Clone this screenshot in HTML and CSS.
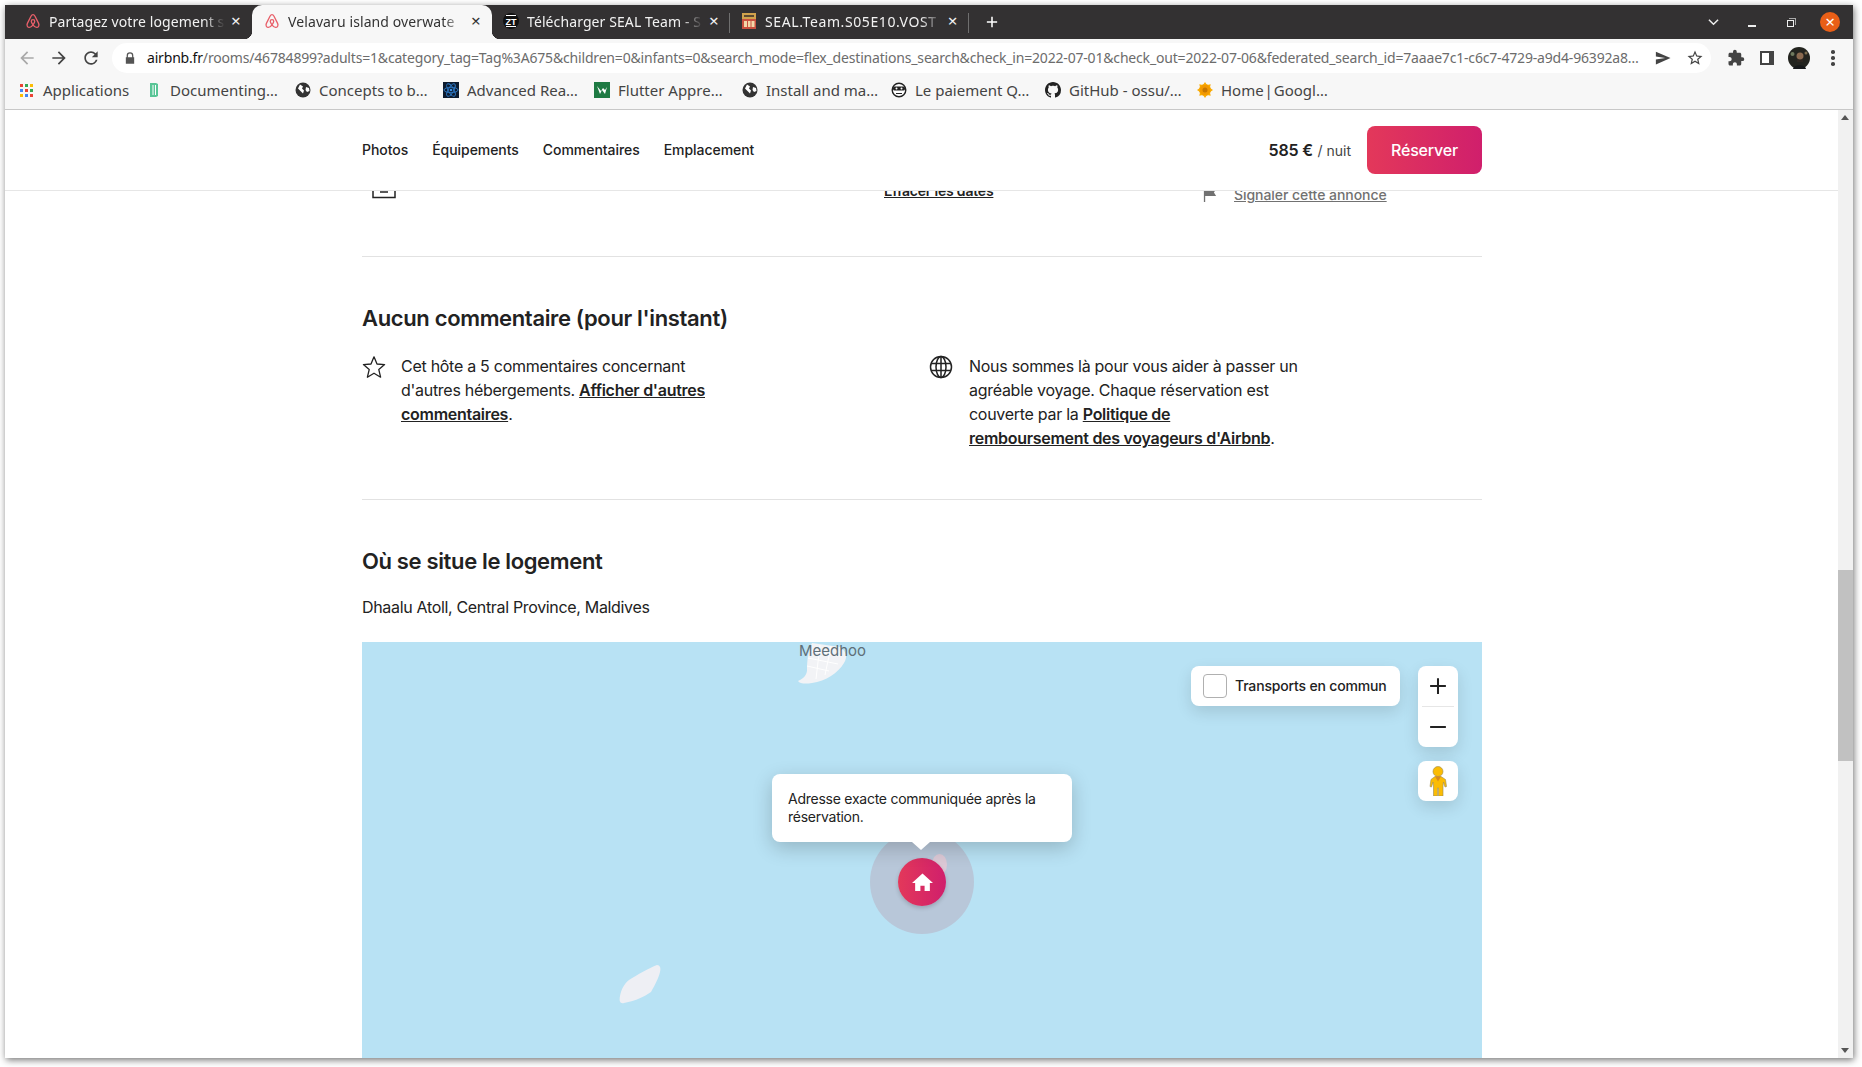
FILE: index.html
```html
<!DOCTYPE html>
<html lang="fr">
<head>
<meta charset="utf-8">
<title>Velavaru island overwater</title>
<link rel="stylesheet" href="styles.css">
</head>
<body>
<div class="window">
  <div class="tabstrip">
    <div class="tab tab-first">
      <svg class="fav" viewBox="0 0 24 24"><path class="belo" d="M12 2.5c-1.4 0-2.2.9-3 2.4L3.6 15.6c-1.5 3.2.3 6 3 6 2 0 3.6-1.3 5.4-3.8 1.8 2.5 3.4 3.8 5.4 3.8 2.7 0 4.5-2.8 3-6L15 4.9c-.8-1.5-1.6-2.4-3-2.4zM12 17.8c-1.5-2-2.6-3.8-2.6-5.3a2.6 2.6 0 0 1 5.2 0c0 1.5-1.1 3.3-2.6 5.3z"/></svg>
      <span class="tab-title">Partagez votre logement s</span>
      <span class="tab-x">×</span>
    </div>
    <div class="tab tab-active">
      <svg class="fav" viewBox="0 0 24 24"><path class="belo" d="M12 2.5c-1.4 0-2.2.9-3 2.4L3.6 15.6c-1.5 3.2.3 6 3 6 2 0 3.6-1.3 5.4-3.8 1.8 2.5 3.4 3.8 5.4 3.8 2.7 0 4.5-2.8 3-6L15 4.9c-.8-1.5-1.6-2.4-3-2.4zM12 17.8c-1.5-2-2.6-3.8-2.6-5.3a2.6 2.6 0 0 1 5.2 0c0 1.5-1.1 3.3-2.6 5.3z"/></svg>
      <span class="tab-title">Velavaru island overwate</span>
      <span class="tab-x">×</span>
    </div>
    <div class="tab tab-sep">
      <svg class="fav" viewBox="0 0 16 16"><circle cx="8" cy="8" r="8" fill="#111"/><path d="M3 2.500h10M3 13.500h10" stroke="#fff" stroke-width="1.200"/><text x="8" y="11.500" class="zt">ZT</text></svg>
      <span class="tab-title">Télécharger SEAL Team - S</span>
      <span class="tab-x">×</span>
    </div>
    <div class="tab tab-sep tab-caps">
      <svg class="fav" viewBox="0 0 16 16"><rect x="1" width="14" height="6" fill="#d0a24c"/><rect x="1" y="6" width="14" height="10" fill="#c9503f"/><rect x="3" y="2" width="10" height="2" fill="#5b4a32"/><rect x="3" y="8" width="3" height="6" fill="#f2d7a8"/><rect x="7" y="8" width="2.500" height="6" fill="#f2d7a8"/><rect x="10.500" y="8" width="3" height="6" fill="#f2d7a8"/></svg>
      <span class="tab-title">SEAL.Team.S05E10.VOST</span>
      <span class="tab-x">×</span>
    </div>
    <svg class="newtab" viewBox="0 0 14 14"><path d="M7 1v12M1 7h12"/></svg>
    <div class="winctl">
      <svg class="chev" viewBox="0 0 12 8"><path d="M1 1.5l5 5 5-5"/></svg>
      <span class="minbtn"></span>
      <span class="maxbtn"></span>
      <span class="closebtn">×</span>
    </div>
  </div>

  <div class="toolbar">
    <svg class="tb-ico dim" viewBox="0 0 24 24"><path d="M20 11H7.83l5.59-5.59L12 4l-8 8 8 8 1.41-1.41L7.83 13H20v-2z"/></svg>
    <svg class="tb-ico" viewBox="0 0 24 24"><path d="M4 11h12.170l-5.590-5.590L12 4l8 8-8 8-1.410-1.410L16.170 13H4v-2z"/></svg>
    <svg class="tb-ico" viewBox="0 0 24 24"><path d="M17.65 6.35A7.958 7.958 0 0 0 12 4c-4.42 0-7.99 3.58-7.99 8s3.57 8 7.99 8c3.73 0 6.84-2.55 7.73-6h-2.08A5.99 5.99 0 0 1 12 18c-3.31 0-6-2.69-6-6s2.69-6 6-6c1.66 0 3.14.69 4.22 1.78L13 11h7V4l-2.35 2.35z"/></svg>
    <div class="omnibox">
      <svg class="lock" viewBox="0 0 12 14"><path d="M2 6V4.2a4 4 0 0 1 8 0V6h1v8H1V6h1zm1.5 0h5V4.2a2.5 2.5 0 0 0-5 0V6z"/></svg>
      <span class="url"><b class="host">airbnb.fr</b>/rooms/46784899?adults=1&amp;category_tag=Tag%3A675&amp;children=0&amp;infants=0&amp;search_mode=flex_destinations_search&amp;check_in=2022-07-01&amp;check_out=2022-07-06&amp;federated_search_id=7aaae7c1-c6c7-4729-a9d4-96392a8…</span>
      <svg class="omni-ico" viewBox="0 0 24 24"><path d="M2.5 20.5L22 12 2.5 3.5v6.6L15 12 2.5 13.9z"/></svg>
      <svg class="omni-ico" viewBox="0 0 24 24"><path d="M22 9.24l-7.19-.62L12 2 9.19 8.63 2 9.24l5.46 4.73L5.82 21 12 17.27 18.18 21l-1.63-7.03L22 9.24zM12 15.4l-3.76 2.27 1-4.28-3.32-2.88 4.38-.38L12 6.1l1.71 4.04 4.38.38-3.32 2.88 1 4.28L12 15.4z"/></svg>
    </div>
    <svg class="tb-ico ext" viewBox="0 0 24 24"><path d="M20.5 11H19V7c0-1.1-.9-2-2-2h-4V3.5a2.5 2.5 0 0 0-5 0V5H4c-1.1 0-1.99.9-1.99 2v3.8H3.5c1.49 0 2.7 1.21 2.7 2.7s-1.21 2.7-2.7 2.7H2V20c0 1.1.9 2 2 2h3.8v-1.5c0-1.49 1.21-2.7 2.7-2.7s2.7 1.21 2.7 2.7V22H17c1.1 0 2-.9 2-2v-4h1.5a2.5 2.5 0 0 0 0-5z"/></svg>
    <span class="sidepanel"></span>
    <svg class="avatar" viewBox="0 0 22 22"><circle cx="11" cy="11" r="11" fill="#23241f"/><circle cx="12" cy="9" r="3.500" fill="#8b6a50"/><path d="M9 11c1 3 5 3 6 0v4H9z" fill="#2f2620"/><path d="M5 22c1-5 12-5 13 0z" fill="#16181a"/><circle cx="4.500" cy="7" r="2" fill="#6f7a5e"/><circle cx="18" cy="6" r="1.500" fill="#7d6d4e"/></svg>
    <span class="dots"><i></i><i></i><i></i></span>
  </div>

  <div class="bookmarks">
    <div class="bm bm-apps">
      <span class="apps"><i class="r"></i><i class="g"></i><i class="y"></i><i class="b"></i><i class="r"></i><i class="g"></i><i class="y"></i><i class="b"></i><i class="r"></i></span>
      <span>Applications</span>
    </div>
    <div class="bm bm-doc">
      <svg class="bm-ico" viewBox="0 0 16 16"><path d="M4 1h6l2 1v12l-2 1H4z" fill="#58c596"/><path d="M7 3v10M9.500 3v10" stroke="#fff" fill="none"/></svg>
      <span>Documenting…</span>
    </div>
    <div class="bm bm-con">
      <svg class="bm-ico" viewBox="0 0 16 16"><circle cx="8" cy="8" r="7.500" fill="#333"/><path d="M5 2.500l3 2-1 2 2 2-1 3-2-2-3-3zM11 5l3 1 .5 3-2.500 1-1.500-2z" fill="#fff"/></svg>
      <span>Concepts to b…</span>
    </div>
    <div class="bm bm-adv">
      <svg class="bm-ico" viewBox="0 0 16 16"><rect width="16" height="16" fill="#0d1b2e"/><g fill="none" stroke="#2d79c7" stroke-width=".9"><ellipse cx="8" cy="8" rx="7" ry="2.700"/><ellipse cx="8" cy="8" rx="7" ry="2.700" transform="rotate(60 8 8)"/><ellipse cx="8" cy="8" rx="7" ry="2.700" transform="rotate(120 8 8)"/></g><circle cx="8" cy="8" r="1.300" fill="#3d8fe0"/></svg>
      <span>Advanced Rea…</span>
    </div>
    <div class="bm bm-flu">
      <svg class="bm-ico" viewBox="0 0 16 16"><rect width="16" height="16" fill="#1e7a43"/><path d="M3 4l3 8 2-4 3 4 2-7-2 3-2-2-2 3z" fill="#fff"/></svg>
      <span>Flutter Appre…</span>
    </div>
    <div class="bm bm-ins">
      <svg class="bm-ico" viewBox="0 0 16 16"><circle cx="8" cy="8" r="7.500" fill="#333"/><path d="M5 2.500l3 2-1 2 2 2-1 3-2-2-3-3zM11 5l3 1 .5 3-2.500 1-1.500-2z" fill="#fff"/></svg>
      <span>Install and ma…</span>
    </div>
    <div class="bm bm-pay">
      <svg class="bm-ico" viewBox="0 0 16 16"><circle cx="8" cy="8" r="6.800" fill="#fff" stroke="#222" stroke-width="1.400"/><rect x="2" y="4.500" width="12" height="4" rx="1.500" fill="#222"/><circle cx="5.500" cy="6.500" r="1" fill="#fff"/><circle cx="10.500" cy="6.500" r="1" fill="#fff"/><path d="M5 11.500h6" stroke="#222"/></svg>
      <span>Le paiement Q…</span>
    </div>
    <div class="bm bm-git">
      <svg class="bm-ico" viewBox="0 0 16 16"><path fill="#222" d="M8 0C3.580 0 0 3.580 0 8c0 3.540 2.290 6.530 5.470 7.590.4.070.55-.17.55-.38 0-.19-.01-.82-.01-1.490-2.010.37-2.530-.49-2.690-.94-.09-.23-.48-.94-.82-1.130-.28-.15-.68-.52-.01-.53.630-.01 1.080.58 1.230.82.720 1.210 1.870.87 2.330.66.070-.52.280-.87.510-1.070-1.780-.2-3.640-.89-3.640-3.950 0-.87.310-1.590.820-2.150-.08-.2-.36-1.020.08-2.120 0 0 .67-.21 2.200.82.640-.18 1.320-.27 2-.27s1.360.09 2 .27c1.530-1.040 2.200-.82 2.200-.82.440 1.100.16 1.920.08 2.120.51.560.82 1.270.82 2.150 0 3.070-1.870 3.750-3.650 3.950.29.250.54.730.54 1.480 0 1.070-.01 1.930-.01 2.200 0 .21.150.46.550.38A8.010 8.010 0 0 0 16 8c0-4.420-3.580-8-8-8z"/></svg>
      <span>GitHub - ossu/…</span>
    </div>
    <div class="bm bm-home">
      <svg class="bm-ico" viewBox="0 0 16 16"><circle cx="8" cy="8" r="6" fill="#f29900"/><path d="M8 0l2 3H6zM8 16l2-3H6zM0 8l3 2V6zM16 8l-3 2V6zM2.300 2.300l3.500.8-2.700 2.700zM13.700 13.700l-3.500-.8 2.700-2.700zM13.700 2.300l-.8 3.500-2.700-2.700zM2.300 13.700l.8-3.500 2.700 2.700z" fill="#f9ab00"/><circle cx="8" cy="8" r="2.500" fill="#c77700"/></svg>
      <span>Home | Googl…</span>
    </div>
  </div>

  <div class="viewport">
    <div class="page">
      <nav class="stickybar">
        <div class="stickyinner">
          <div class="sections">
            <span>Photos</span>
            <span>Équipements</span>
            <span>Commentaires</span>
            <span>Emplacement</span>
          </div>
          <div class="book">
            <span class="price"><b>585 €</b> <span class="pernight">/ nuit</span></span>
            <span class="reserve">Réserver</span>
          </div>
        </div>
      </nav>

      <main class="content">
        <div class="cutrow">
          <svg class="cal" viewBox="0 0 24 30"><path d="M1 1v26.500h22V1M8 22h8" fill="none" stroke="#222" stroke-width="1.500"/></svg>
          <a class="clear">Effacer les dates</a>
          <span class="report">
            <svg class="flag" viewBox="0 0 16 16"><path d="M1 0h1.500v1H15l-2.500 4L15 9H2.500v7H1z" fill="#717171"/></svg>
            <a>Signaler cette annonce</a>
          </span>
        </div>

        <section class="reviews">
          <h2>Aucun commentaire (pour l'instant)</h2>
          <div class="twocol">
            <div class="note">
              <svg class="note-ico" viewBox="0 0 24 24"><path d="M12 1.800l3 7.200 7.600.6-5.800 5 1.800 7.600L12 18.200l-6.600 4 1.800-7.600-5.800-5L9 9z" fill="none" stroke="#222" stroke-width="1.300" stroke-linejoin="round"/></svg>
              <p>Cet hôte a 5 commentaires concernant<br>d'autres hébergements. <a>Afficher d'autres<br>commentaires</a>.</p>
            </div>
            <div class="note note-wide">
              <svg class="note-ico" viewBox="0 0 24 24"><g fill="none" stroke="#222" stroke-width="1.500"><circle cx="12" cy="12" r="10.500"/><ellipse cx="12" cy="12" rx="5" ry="10.500"/><path d="M2 8.500h20M2 15.500h20M12 1.500v21"/></g></svg>
              <p>Nous sommes là pour vous aider à passer un<br>agréable voyage. Chaque réservation est<br>couverte par la <a>Politique de<br>remboursement des voyageurs d'Airbnb</a>.</p>
            </div>
          </div>
        </section>

        <section class="location">
          <h2>Où se situe le logement</h2>
          <p class="place">Dhaalu Atoll, Central Province, Maldives</p>
          <div class="map">
            <svg class="island isl-a" viewBox="0 0 50 41"><path d="M14 0L42 4C48 8 50 14 46 20 40 30 28 38 14 40 8 41 2 41 0 38 4 36 8 34 9 28 9 18 10 8 14 0z" fill="#f2f3f6"/><path d="M12 8l30 5M10 15l30 6M9 23l22 5M22 2l-4 34M33 3l-6 29" stroke="#fff" fill="none"/></svg>
            <span class="map-label">Meedhoo</span>
            <svg class="island isl-b" viewBox="0 0 42 40"><path d="M38 1c3 0 4 3 3 7-1 5-5 13-9 20-6 4-15 9-27 11-4 1-5-2-4-7 1-6 4-12 9-16C18 11 30 4 38 1z" fill="#eeeff4"/></svg>

            <label class="transit"><span class="checkbox"></span><span class="transit-label">Transports en commun</span></label>
            <div class="zoomctl">
              <button class="zoombtn"><svg viewBox="0 0 16 16"><path d="M8 1v14M1 8h14"/></svg></button>
              <button class="zoombtn"><svg viewBox="0 0 16 16"><path d="M1 8h14"/></svg></button>
            </div>
            <div class="pegman">
              <svg viewBox="0 0 18 30"><circle cx="9" cy="5.500" r="5" fill="#fbbc04" stroke="#9a8a55" stroke-width=".6"/><path d="M6 10.500h6l4.500 3 1 7-1.500.5-1.500-5-.5 4v10H9.500v-8h-1v8H4.500V20l-.5-4-1.500 5L1 20.500l1-7z" fill="#fbbc04" stroke="#9a8a55" stroke-width=".6"/><path d="M6 10.500h6l-3 5z" fill="#d98a1f"/></svg>
            </div>

            <span class="area"></span>
            <span class="islet"></span>
            <span class="pin"><svg viewBox="0 0 20 20"><path d="M10 1.500L0 10.500h3V18h5v-5h4v5h5v-7.500h3z" fill="#fff"/></svg></span>
            <div class="tooltip">Adresse exacte communiquée après la réservation.</div>
          </div>
        </section>
      </main>
    </div>
    <div class="scrollbar">
      <span class="sb-up"></span>
      <span class="sb-thumb"></span>
      <span class="sb-down"></span>
    </div>
  </div>
</div>
</body>
</html>
```

FILE: styles.css
```css
* { box-sizing: border-box; }
html, body { margin: 0; height: 100%; background: #fff; overflow: hidden; }
body { padding: 5px 0 0 5px; font-family: "Inter", "Noto Sans", sans-serif; color: #222; }

.window {
  width: 1848px;
  height: 1053px;
  display: flex;
  flex-direction: column;
  background: #fff;
  box-shadow: 1px 2px 7px rgba(0,0,0,.55);
}

/* tab strip */
.tabstrip {
  height: 34px;
  background: #333132;
  display: flex;
  align-items: stretch;
  flex: none;
  font-family: "Noto Sans", sans-serif;
  font-size: 14px;
  letter-spacing: .1px;
  color: #f2f2f2;
}
.tab {
  width: 239px;
  display: flex;
  align-items: center;
  padding: 0 9px 2px 11px;
  position: relative;
}
.tab-first { width: 247px; padding-left: 20px; }
.tab-active {
  background: #f7f7f7;
  color: #333;
  border-radius: 10px 10px 0 0;
  width: 240px;
  padding-left: 12px;
}
.tab-active::before,
.tab-active::after {
  content: "";
  position: absolute;
  bottom: 0;
  width: 8px;
  height: 8px;
}
.tab-active::before { left: -8px; background: radial-gradient(circle at 0 0, transparent 8px, #f7f7f7 8.5px); }
.tab-active::after { right: -8px; background: radial-gradient(circle at 100% 0, transparent 8px, #f7f7f7 8.5px); }
.tab-active + .tab-sep { width: 238px; }
.tab-caps { letter-spacing: .6px; }
.tab-sep::after {
  content: "";
  position: absolute;
  right: 0;
  top: 8px;
  height: 20px;
  width: 1px;
  background: #6f6f6f;
}
.fav { width: 16px; height: 16px; flex: none; margin-right: 8px; }
.belo { fill: none; stroke: #e8606a; stroke-width: 2; }
.zt { font: 700 9px "Liberation Sans", sans-serif; fill: #fff; text-anchor: middle; }
.tab-title {
  flex: 1;
  min-width: 0;
  white-space: nowrap;
  -webkit-mask-image: linear-gradient(to right, #000 88%, transparent 100%);
  mask-image: linear-gradient(to right, #000 88%, transparent 100%);
}
.tab-x { width: 14px; margin-left: 4px; font-size: 17px; line-height: 16px; text-align: center; flex: none; }
.newtab { width: 12px; height: 12px; margin: 11px 0 0 17px; flex: none; }
.newtab path { stroke: #fff; stroke-width: 1.800; fill: none; }
.winctl { margin-left: auto; display: flex; align-items: center; padding-right: 13px; }
.chev { width: 11px; height: 8px; margin-right: 2px; }
.chev path { fill: none; stroke: #eee; stroke-width: 1.600; }
.minbtn { width: 8px; height: 1.500px; background: #eee; margin: 8px 0 0 27px; }
.maxbtn { width: 7px; height: 7px; border: 1px solid #eee; margin: 2px 0 0 31px; position: relative; }
.maxbtn::after { content: ""; position: absolute; left: 1px; top: -3px; width: 6px; height: 6px; border: 1px solid #aaa; border-left: 0; border-bottom: 0; }
.closebtn {
  width: 20px;
  height: 20px;
  border-radius: 50%;
  background: #e95f17;
  color: #fff;
  font-size: 17px;
  letter-spacing: 0;
  line-height: 19px;
  text-align: center;
  margin-left: 26px;
}

/* toolbar */
.toolbar {
  height: 34px;
  background: #f7f7f7;
  flex: none;
  display: flex;
  align-items: center;
  padding: 4px 0 0 12px;
}
.tb-ico { width: 20px; height: 20px; fill: #444; flex: none; margin-right: 12px; }
.tb-ico.dim { fill: #a9a9a9; }
.omnibox {
  width: 1599px;
  height: 30px;
  margin: 0 13px 0 -1px;
  border-radius: 15px;
  background: #fff;
  display: flex;
  align-items: center;
  padding: 0 7px 0 13px;
  flex: none;
}
.lock { width: 10px; height: 12px; fill: #555; flex: none; margin-right: 12px; }
.url {
  flex: 1;
  font-family: "Noto Sans", sans-serif;
  font-size: 14px;
  letter-spacing: -.18px;
  color: #6c6c6c;
  white-space: nowrap;
  padding-bottom: 2px;
}
.host { font-weight: 400; color: #111; }
.omni-ico { width: 18px; height: 18px; fill: #444; flex: none; margin-left: 14px; }
.ext { width: 18px; height: 18px; margin: 0 15px 0 3px; }
.sidepanel { width: 14px; height: 14px; border: 2px solid #444; border-right-width: 5px; background: #fff; flex: none; margin-right: 14px; }
.avatar { width: 22px; height: 22px; flex: none; }
.dots { display: flex; flex-direction: column; gap: 2.500px; margin-left: 21px; }
.dots i { width: 3.500px; height: 3.500px; border-radius: 50%; background: #444; display: block; }

/* bookmarks */
.bookmarks {
  height: 37px;
  flex: none;
  background: #f7f7f7;
  border-bottom: 1px solid #c8c8c8;
  display: flex;
  align-items: center;
  padding: 0 0 2px 15px;
  font-family: "Noto Sans", sans-serif;
  font-size: 15px;
  color: #444;
  white-space: nowrap;
}
.bm { display: flex; align-items: center; flex: none; }
.bm-ico { width: 16px; height: 16px; margin-right: 8px; flex: none; }
.bm-apps { width: 126px; }
.bm-doc { width: 149px; }
.bm-con { width: 148px; }
.bm-adv { width: 151px; }
.bm-flu { width: 148px; }
.bm-ins { width: 149px; }
.bm-pay { width: 154px; }
.bm-git { width: 152px; }
.bm-home { word-spacing: -3px; }
.apps { width: 13px; height: 13px; margin-right: 10px; display: grid; grid-template-columns: repeat(3, 3px); gap: 2px; }
.apps i { display: block; }
.apps .r { background: #ea4335; }
.apps .g { background: #34a853; }
.apps .y { background: #fbbc04; }
.apps .b { background: #4285f4; }

/* page */
.viewport { flex: 1; display: flex; min-height: 0; }
.page { flex: 1; min-width: 0; overflow: hidden; background: #fff; }
.scrollbar { width: 15px; flex: none; background: #f1f1f1; position: relative; }
.sb-up, .sb-down { position: absolute; left: 3px; width: 0; height: 0; border-left: 4px solid transparent; border-right: 4px solid transparent; }
.sb-up { top: 5px; border-bottom: 5px solid #555; }
.sb-down { bottom: 5px; border-top: 5px solid #555; }
.sb-thumb { position: absolute; left: 0; top: 460px; width: 15px; height: 191px; background: #c1c1c1; }

.stickybar {
  height: 81px;
  background: #fff;
  border-bottom: 1px solid #e6e6e6;
  position: relative;
  z-index: 2;
}
.stickyinner {
  width: 1120px;
  margin-left: 357px;
  height: 80px;
  display: flex;
  align-items: center;
  justify-content: space-between;
}
.sections { display: flex; gap: 24px; font-size: 14px; font-weight: 500; letter-spacing: -.05px; padding-bottom: 2px; }
.book { display: flex; align-items: center; gap: 16px; }
.price b { font-size: 16px; font-weight: 600; letter-spacing: -.15px; }
.pernight { font-size: 14px; color: #444; }
.reserve {
  width: 115px;
  height: 48px;
  border-radius: 8px;
  background: linear-gradient(to right, #e3385a, #d01f6c);
  color: #fff;
  font-size: 16px;
  font-weight: 500;
  letter-spacing: -.2px;
  display: flex;
  align-items: center;
  justify-content: center;
}

.content { width: 1120px; margin-left: 357px; }
.cutrow {
  height: 82px;
  margin-top: -16px;
  border-bottom: 1px solid #e2e2e2;
  display: grid;
  grid-template-columns: 522px 319px 1fr;
  align-items: start;
  font-size: 14px;
  font-weight: 600;
  letter-spacing: -.2px;
}
.cal { width: 24px; height: 30px; margin: -5px 0 0 10px; }
.clear { text-decoration: underline; margin-top: 7px; }
.report { display: flex; align-items: center; margin-top: 11px; color: #717171; font-weight: 500; letter-spacing: -.05px; }
.report a { text-decoration: underline; }
.flag { width: 14px; height: 14px; margin-right: 17px; }

h2 { margin: 0; font-size: 22px; font-weight: 600; letter-spacing: -.35px; line-height: 26px; }
.reviews { padding-top: 48px; border-bottom: 1px solid #e2e2e2; height: 243px; }
.twocol { display: grid; grid-template-columns: 567px 1fr; margin-top: 23px; }
.note { display: flex; gap: 15px; }
.note-wide { gap: 16px; }
.note-ico { width: 24px; height: 24px; flex: none; margin-top: 1px; }
.note p { margin: 0; font-size: 16px; line-height: 24px; letter-spacing: -.28px; }
.note a { font-weight: 600; text-decoration: underline; }

.location { padding-top: 48px; }
.place { margin: 21px 0 0; font-size: 16px; line-height: 24px; letter-spacing: -.33px; }

.map {
  margin-top: 23px;
  height: 416px;
  background: #b8e2f4;
  position: relative;
  overflow: hidden;
}
.map-label { position: absolute; left: 437px; top: 0; font-size: 15px; line-height: 17px; color: #5e6f78; }
.island { position: absolute; }
.isl-a { left: 436px; top: 1px; width: 50px; height: 41px; }
.isl-b { left: 257px; top: 322px; width: 42px; height: 40px; }

.transit {
  position: absolute;
  left: 829px;
  top: 24px;
  width: 209px;
  height: 40px;
  padding: 0 12px;
  background: #fff;
  border-radius: 8px;
  box-shadow: 0 6px 16px rgba(0,0,0,.12);
  display: flex;
  align-items: center;
  gap: 8px;
  font-size: 14px;
  font-weight: 500;
  letter-spacing: -.17px;
}
.transit-label { padding-bottom: 2px; }
.checkbox { width: 24px; height: 24px; border: 1px solid #b0b0b0; border-radius: 4px; flex: none; }
.zoomctl {
  position: absolute;
  left: 1056px;
  top: 24px;
  width: 40px;
  height: 81px;
  background: #fff;
  border-radius: 8px;
  box-shadow: 0 6px 16px rgba(0,0,0,.12);
  display: flex;
  flex-direction: column;
  padding: 0 4px;
}
.zoombtn { flex: 1; background: none; border: 0; padding: 0; display: flex; align-items: center; justify-content: center; }
.zoombtn + .zoombtn { border-top: 1px solid #e6e6e6; }
.zoombtn svg { width: 18px; height: 18px; }
.zoombtn path { stroke: #222; stroke-width: 1.800; fill: none; }
.pegman {
  position: absolute;
  left: 1056px;
  top: 119px;
  width: 40px;
  height: 40px;
  background: #fff;
  border-radius: 8px;
  box-shadow: 0 6px 16px rgba(0,0,0,.12);
  display: flex;
  align-items: center;
  justify-content: center;
}
.pegman svg { width: 18px; height: 30px; }
.area { position: absolute; left: 508px; top: 188px; width: 104px; height: 104px; border-radius: 50%; background: #b8c7d9; }
.islet { position: absolute; left: 570px; top: 212px; width: 15px; height: 21px; border-radius: 50%; background: #dcc9d6; }
.pin {
  position: absolute;
  left: 536px;
  top: 216px;
  width: 48px;
  height: 48px;
  border-radius: 50%;
  background: linear-gradient(to right, #e3385a, #d01f6c);
  box-shadow: 0 2px 4px rgba(0,0,0,.18);
  display: flex;
  align-items: center;
  justify-content: center;
}
.pin svg { width: 21px; height: 21px; }
.tooltip {
  position: absolute;
  left: 410px;
  top: 132px;
  width: 300px;
  height: 68px;
  padding: 16px;
  background: #fff;
  border-radius: 8px;
  box-shadow: 0 6px 20px rgba(0,0,0,.2);
  font-size: 14px;
  line-height: 18px;
  letter-spacing: -.25px;
}
.tooltip::after {
  content: "";
  position: absolute;
  left: 140px;
  bottom: -8px;
  width: 0;
  height: 0;
  border-left: 9px solid transparent;
  border-right: 9px solid transparent;
  border-top: 8px solid #fff;
}
```
